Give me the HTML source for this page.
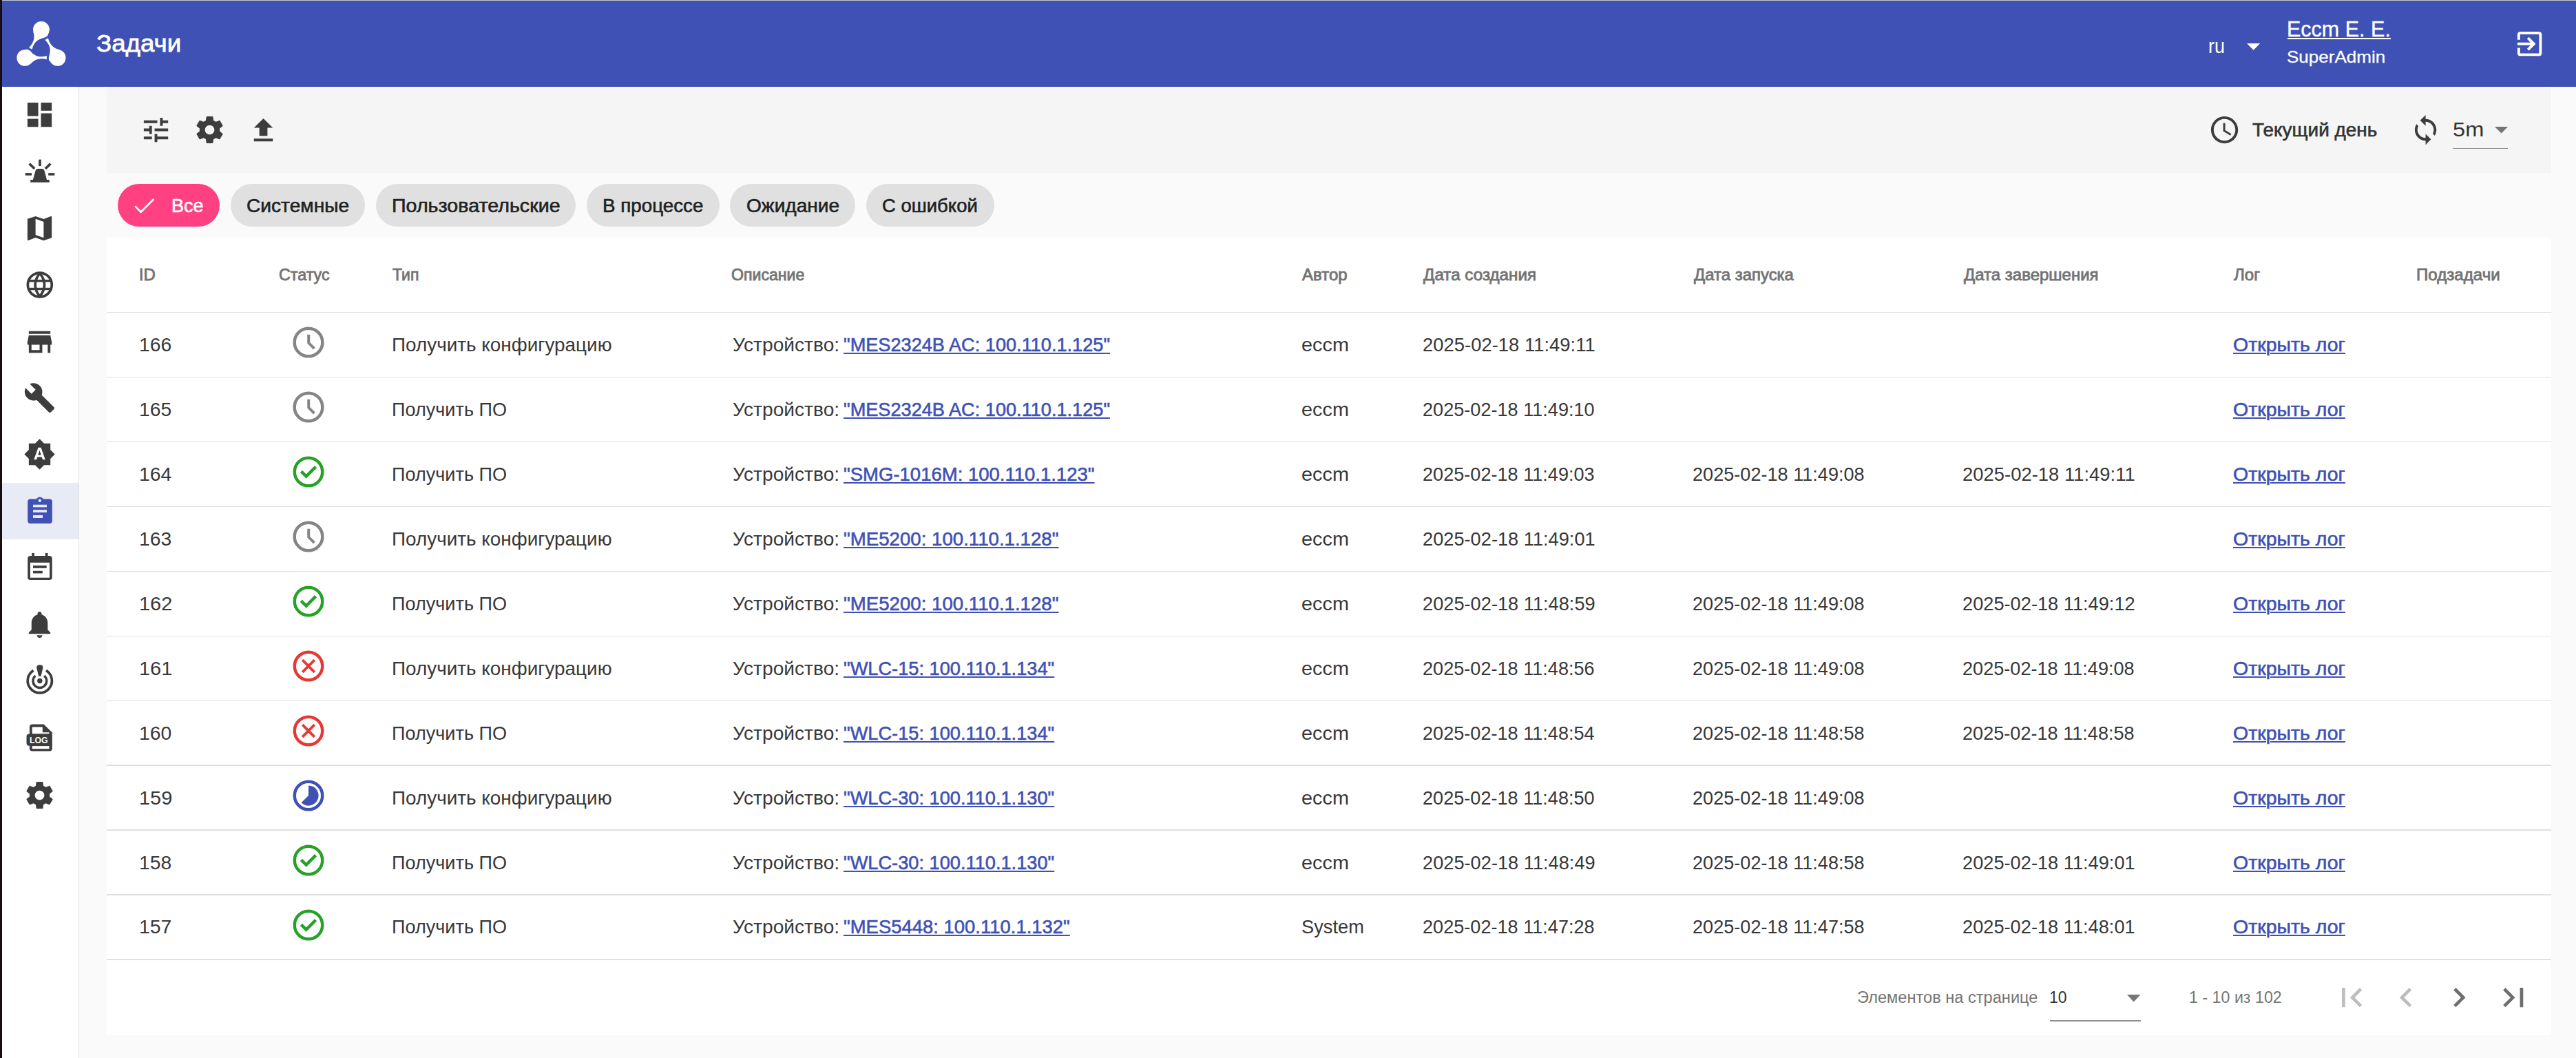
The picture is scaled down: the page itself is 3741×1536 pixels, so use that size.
<!DOCTYPE html>
<html><head><meta charset="utf-8"><title>Задачи</title>
<style>
html,body{margin:0;padding:0;}
body{width:3741px;height:1536px;overflow:hidden;position:relative;background:#fafafa;font-family:"Liberation Sans",sans-serif;}
.b{position:absolute;}
.ic{position:absolute;overflow:visible;}
.t{position:absolute;white-space:nowrap;line-height:1;transform-origin:0 50%;}
</style></head><body>
<div class="b" style="left:0px;top:0px;width:3px;height:1536px;background:#170e11"></div>
<div class="b" style="left:3px;top:0px;width:3738px;height:1px;background:#c4c6cc"></div>
<div class="b" style="left:3px;top:1px;width:3738px;height:125px;background:#3f51b5"></div>
<div class="b" style="left:3px;top:126px;width:111px;height:1410px;background:#fff"></div>
<div class="b" style="left:113.6px;top:126px;width:1.8px;height:1410px;background:#e2e2e2"></div>
<div class="b" style="left:3px;top:701px;width:111px;height:82px;background:#e8eaf6"></div>
<div class="b" style="left:155px;top:126px;width:3550px;height:125px;background:#f5f5f5"></div>
<div class="b" style="left:170.9px;top:267.2px;width:148.5px;height:62px;background:#ff4081;border-radius:31px"></div>
<div class="b" style="left:335px;top:267.2px;width:194.9px;height:62px;background:#e0e0e0;border-radius:31px"></div>
<div class="b" style="left:546.2px;top:267.2px;width:289.8px;height:62px;background:#e0e0e0;border-radius:31px"></div>
<div class="b" style="left:852px;top:267.2px;width:192.6px;height:62px;background:#e0e0e0;border-radius:31px"></div>
<div class="b" style="left:1060.2px;top:267.2px;width:181.8px;height:62px;background:#e0e0e0;border-radius:31px"></div>
<div class="b" style="left:1257.6px;top:267.2px;width:186.4px;height:62px;background:#e0e0e0;border-radius:31px"></div>
<div class="b" style="left:155px;top:344.8px;width:3550px;height:1157.8px;background:#fff"></div>
<div class="b" style="left:155px;top:452.9px;width:3550px;height:1.6px;background:#e0e0e0"></div>
<div class="b" style="left:155px;top:546.84px;width:3550px;height:1.6px;background:#e0e0e0"></div>
<div class="b" style="left:155px;top:640.78px;width:3550px;height:1.6px;background:#e0e0e0"></div>
<div class="b" style="left:155px;top:734.72px;width:3550px;height:1.6px;background:#e0e0e0"></div>
<div class="b" style="left:155px;top:828.66px;width:3550px;height:1.6px;background:#e0e0e0"></div>
<div class="b" style="left:155px;top:922.6px;width:3550px;height:1.6px;background:#e0e0e0"></div>
<div class="b" style="left:155px;top:1016.54px;width:3550px;height:1.6px;background:#e0e0e0"></div>
<div class="b" style="left:155px;top:1110.48px;width:3550px;height:1.6px;background:#e0e0e0"></div>
<div class="b" style="left:155px;top:1204.42px;width:3550px;height:1.6px;background:#e0e0e0"></div>
<div class="b" style="left:155px;top:1298.36px;width:3550px;height:1.6px;background:#e0e0e0"></div>
<div class="b" style="left:155px;top:1392.3px;width:3550px;height:1.6px;background:#e0e0e0"></div>
<div class="b" style="left:3562.1px;top:214.5px;width:79.9px;height:1.8px;background:#8a8a8a"></div>
<div class="b" style="left:3322.2px;top:55.4px;width:150.2px;height:2.1px;background:#fff"></div>
<div class="b" style="left:2977px;top:1481.0px;width:131.7px;height:1.8px;background:#8f8f8f"></div>
<svg class="ic" style="left:34.00px;top:143.20px;width:47.04px;height:47.04px;" viewBox="0 0 24 24"><path fill="#3d3d3d" d="M3 13h8V3H3v10zm0 8h8v-6H3v6zm10 0h8V11h-8v10zm0-18v6h8V3h-8z"/></svg>
<svg class="ic" style="left:34.00px;top:307.60px;width:47.04px;height:47.04px;" viewBox="0 0 24 24"><path fill="#3d3d3d" d="M15,19L9,16.89V5L15,7.11M20.5,3C20.44,3 20.39,3 20.34,3L15,5.1L9,3L3.36,4.9C3.15,4.97 3,5.15 3,5.38V20.5A0.5,0.5 0 0,0 3.5,21C3.55,21 3.61,21 3.66,20.97L9,18.9L15,21L20.64,19.1C20.85,19 21,18.85 21,18.62V3.5A0.5,0.5 0 0,0 20.5,3Z"/></svg>
<svg class="ic" style="left:34.00px;top:472.70px;width:47.04px;height:47.04px;" viewBox="0 0 24 24"><path fill="#3d3d3d" d="M20 4H4v2h16V4zm1 10v-2l-1-5H4l-1 5v2h1v6h10v-6h4v6h2v-6h1zm-9 4H6v-4h6v4z"/></svg>
<svg class="ic" style="left:34.00px;top:554.20px;width:47.04px;height:47.04px;" viewBox="0 0 24 24"><path fill="#3d3d3d" d="M22.7 19l-9.1-9.1c.9-2.3.4-5-1.5-6.9-2-2-5-2.4-7.4-1.3L9 6 6 9 1.6 4.7C.4 7.1.9 10.1 2.9 12.1c1.9 1.9 4.6 2.4 6.9 1.5l9.1 9.1c.4.4 1 .4 1.4 0l2.3-2.3c.5-.4.5-1.1.1-1.4z"/></svg>
<svg class="ic" style="left:34.40px;top:636.40px;width:47.04px;height:47.04px;" viewBox="0 0 24 24"><path fill="#3d3d3d" d="M10.85 12.65h2.3L12 9l-1.15 3.65zM20 8.69V4h-4.69L12 .69 8.69 4H4v4.69L.69 12 4 15.31V20h4.69L12 23.31 15.31 20H20v-4.69L23.31 12 20 8.69zM14.3 16l-.7-2h-3.2l-.7 2H7.8L11 7h2l3.2 9h-1.9z"/></svg>
<svg class="ic" style="left:34.00px;top:883.00px;width:47.04px;height:47.04px;" viewBox="0 0 24 24"><path fill="#3d3d3d" d="M12 22c1.1 0 2-.9 2-2h-4c0 1.1.89 2 2 2zm6-6v-5c0-3.07-1.64-5.64-4.5-6.32V4c0-.83-.67-1.5-1.5-1.5s-1.5.67-1.5 1.5v.68C7.63 5.36 6 7.92 6 11v5l-2 2v1h16v-1l-2-2z"/></svg>
<svg class="ic" style="left:34.20px;top:1130.60px;width:47.04px;height:47.04px;" viewBox="0 0 24 24"><path fill="#3d3d3d" d="M19.43 12.98c.04-.32.07-.64.07-.98s-.03-.66-.07-.98l2.11-1.65c.19-.15.24-.42.12-.64l-2-3.46c-.12-.22-.39-.3-.61-.22l-2.49 1c-.52-.4-1.08-.73-1.69-.98l-.38-2.65C14.46 2.18 14.25 2 14 2h-4c-.25 0-.46.18-.49.42l-.38 2.65c-.61.25-1.17.59-1.69.98l-2.49-1c-.23-.09-.49 0-.61.22l-2 3.46c-.13.22-.07.49.12.64l2.11 1.65c-.04.32-.07.65-.07.98s.03.66.07.98l-2.11 1.65c-.19.15-.24.42-.12.64l2 3.46c.12.22.39.3.61.22l2.49-1c.52.4 1.08.73 1.69.98l.38 2.65c.03.24.24.42.49.42h4c.25 0 .46-.18.49-.42l.38-2.65c.61-.25 1.17-.59 1.69-.98l2.49 1c.23.09.49 0 .61-.22l2-3.46c.12-.22.07-.49-.12-.64l-2.11-1.65zM12 15.5c-1.93 0-3.5-1.57-3.5-3.5s1.57-3.5 3.5-3.5 3.5 1.57 3.5 3.5-1.57 3.5-3.5 3.5z"/></svg>
<svg class="ic" style="left:0;top:0;width:120px;height:1200px" viewBox="0 0 120 1200">
<g fill="#3d3d3d">
 <!-- siren -->
 <rect x="56.1" y="231.6" width="3.7" height="9.5"/>
 <rect x="36.7" y="251.1" width="9.3" height="3.6"/>
 <rect x="70.2" y="251.1" width="9.1" height="3.6"/>
 <path d="M44.2 261 H47.9 L51.4 248.2 Q52.3 245 55.3 245 H60.9 Q63.9 245 64.6 248.2 L68 261 H71.7 V264.8 H44.2 Z"/>
</g>
<g stroke="#3d3d3d" stroke-width="3.7" fill="none">
 <line x1="42.6" y1="237.7" x2="50.2" y2="245"/>
 <line x1="73.4" y1="237.7" x2="65.8" y2="245"/>
 <!-- globe -->
 <circle cx="57.8" cy="413.5" r="17.45"/>
 <path d="M57.8 396.6 Q44.4 413.5 57.8 430.4 Q71.2 413.5 57.8 396.6" stroke-width="3.6"/>
 <!-- crisis alert rings -->
 <path d="M48.6 973.3 A17.6 17.6 0 1 0 67.0 973.3" stroke-width="3.7"/>
 <path d="M51.4 981.0 A9.9 9.9 0 1 0 64.2 981.0" stroke-width="3.4"/>
</g>
<g fill="#3d3d3d">
 <rect x="40" y="406.0" width="36" height="3.4"/>
 <rect x="40" y="417.8" width="36" height="3.4"/>
</g>
<!-- assignment -->
<g fill="#3f51b5">
 <rect x="40.2" y="724.5" width="35.6" height="35.4" rx="4"/>
 <circle cx="57.8" cy="726.8" r="5.4"/>
</g>
<g fill="#e8eaf6">
 <circle cx="57.8" cy="726.8" r="2.2"/>
 <rect x="48" y="732.7" width="19.9" height="3.7"/>
 <rect x="48" y="740.1" width="19.9" height="3.8"/>
 <rect x="48" y="747.9" width="14" height="4.1"/>
</g>
<!-- calendar -->
<g fill="#3d3d3d">
 <rect x="40.2" y="806.9" width="35.5" height="35.2" rx="4"/>
 <rect x="46.2" y="802.9" width="3.7" height="5"/>
 <rect x="65.7" y="802.9" width="3.8" height="5"/>
</g>
<rect x="43.9" y="816.8" width="28.1" height="21.9" fill="#fff"/>
<g fill="#3d3d3d">
 <rect x="48" y="821.1" width="19.7" height="3.7"/>
 <rect x="48" y="828.8" width="13.8" height="3.6"/>
</g>
<!-- crisis alert dot + exclamation -->
<g fill="#3d3d3d">
 <circle cx="57.8" cy="988.5" r="3.7"/>
 <path d="M53.2 969.5 Q53.0 965.2 57.8 965.2 Q62.6 965.2 62.4 969.5 L59.5 981.7 H56.1 Z"/>
</g>
<!-- log file -->
<g fill="#3d3d3d">
 <path d="M47 1051.6 H63.5 L75.8 1063.5 V1086.5 Q75.8 1090.5 71.8 1090.5 H46.9 Q42.9 1090.5 42.9 1086.5 V1082.8 H42.5 Q38.5 1082.8 38.5 1078.8 V1069.5 Q38.5 1065.5 42.5 1065.5 H42.9 V1055.6 Q42.9 1051.6 47 1051.6 Z"/>
</g>
<g fill="#fff">
 <path d="M46.7 1055.5 H61.8 V1063.3 H71.4 V1065.2 H46.7 Z"/>
 <rect x="46.7" y="1083.1" width="24.7" height="4"/>
</g>
<text x="43.0" y="1079" font-family="Liberation Sans" font-weight="700" font-size="13.6" fill="#fff" textLength="26.4" lengthAdjust="spacingAndGlyphs">LOG</text>
</svg>
<svg class="ic" style="left:15px;top:20px;width:90px;height:90px" viewBox="0 0 1058 1058">
<g fill="#fff">
 <g id="lobe"><circle cx="528" cy="270" r="140"/>
 <path d="M392 305 C412 380 425 470 318 578 L372 607 C395 500 460 430 580 408 C610 400 630 385 645 360 L600 300 Z"/></g>
 <use href="#lobe" transform="rotate(120 528 591)"/>
 <use href="#lobe" transform="rotate(240 528 591)"/>
</g></svg>
<svg class="ic" style="left:3650.00px;top:40.00px;width:47.28px;height:47.28px;" viewBox="0 0 24 24"><path fill="#fff" d="M10.09 15.59L11.5 17l5-5-5-5-1.41 1.41L12.67 11H3v2h9.67l-2.58 2.59zM19 3H5c-1.11 0-2 .9-2 2v4h2V5h14v14H5v-4H3v4c0 1.1.89 2 2 2h14c1.1 0 2-.9 2-2V5c0-1.1-.9-2-2-2z"/></svg>
<svg class="ic" style="left:202.50px;top:165.10px;width:47.04px;height:47.04px;" viewBox="0 0 24 24"><path fill="#3d3d3d" d="M3 17v2h6v-2H3zM3 5v2h10V5H3zm10 16v-2h8v-2h-8v-2h-2v6h2zM7 9v2H3v2h4v2h2V9H7zm14 4v-2H11v2h10zm-6-4h2V7h4V5h-4V3h-2v6z"/></svg>
<svg class="ic" style="left:280.80px;top:165.20px;width:47.04px;height:47.04px;" viewBox="0 0 24 24"><path fill="#3d3d3d" d="M19.43 12.98c.04-.32.07-.64.07-.98s-.03-.66-.07-.98l2.11-1.65c.19-.15.24-.42.12-.64l-2-3.46c-.12-.22-.39-.3-.61-.22l-2.49 1c-.52-.4-1.08-.73-1.69-.98l-.38-2.65C14.46 2.18 14.25 2 14 2h-4c-.25 0-.46.18-.49.42l-.38 2.65c-.61.25-1.17.59-1.69.98l-2.49-1c-.23-.09-.49 0-.61.22l-2 3.46c-.13.22-.07.49.12.64l2.11 1.65c-.04.32-.07.65-.07.98s.03.66.07.98l-2.11 1.65c-.19.15-.24.42-.12.64l2 3.46c.12.22.39.3.61.22l2.49-1c.52.4 1.08.73 1.69.98l.38 2.65c.03.24.24.42.49.42h4c.25 0 .46-.18.49-.42l.38-2.65c.61-.25 1.17-.59 1.69-.98l2.49 1c.23.09.49 0 .61-.22l2-3.46c.12-.22.07-.49-.12-.64l-2.11-1.65zM12 15.5c-1.93 0-3.5-1.57-3.5-3.5s1.57-3.5 3.5-3.5 3.5 1.57 3.5 3.5-1.57 3.5-3.5 3.5z"/></svg>
<svg class="ic" style="left:359.10px;top:165.50px;width:47.04px;height:47.04px;" viewBox="0 0 24 24"><path fill="#3d3d3d" d="M9 16h6v-6h4l-7-7-7 7h4zm-4 2h14v2H5z"/></svg>
<svg class="ic" style="left:3206.80px;top:165.10px;width:47.16px;height:47.16px;" viewBox="0 0 24 24"><path fill="#3d3d3d" d="M11.99 2C6.47 2 2 6.48 2 12s4.47 10 9.99 10C17.52 22 22 17.52 22 12S17.52 2 11.99 2zM12 20c-4.42 0-8-3.58-8-8s3.58-8 8-8 8 3.58 8 8-3.58 8-8 8zm.5-13H11v6l5.25 3.15.75-1.23-4.5-2.67z"/></svg>
<svg class="ic" style="left:3499.00px;top:165.00px;width:47.16px;height:47.16px;" viewBox="0 0 24 24"><path fill="#3d3d3d" d="M12 4V1L8 5l4 4V6c3.31 0 6 2.69 6 6 0 1.01-.25 1.97-.7 2.8l1.46 1.46C19.54 15.03 20 13.57 20 12c0-4.42-3.58-8-8-8zm0 14c-3.31 0-6-2.69-6-6 0-1.01.25-1.97.7-2.8L5.24 7.74C4.46 8.97 4 10.43 4 12c0 4.42 3.58 8 8 8v3l4-4-4-4v3z"/></svg>
<svg class="ic" style="left:420.80px;top:470.37px;width:54.00px;height:54.00px" viewBox="0 0 24 24"><circle cx="12" cy="12" r="9.04" fill="none" stroke="#858585" stroke-width="2"/><path d="M12.1 6.95 V12.35 L15.75 16.0" fill="none" stroke="#858585" stroke-width="1.75" stroke-linejoin="miter"/></svg>
<svg class="ic" style="left:420.80px;top:564.31px;width:54.00px;height:54.00px" viewBox="0 0 24 24"><circle cx="12" cy="12" r="9.04" fill="none" stroke="#858585" stroke-width="2"/><path d="M12.1 6.95 V12.35 L15.75 16.0" fill="none" stroke="#858585" stroke-width="1.75" stroke-linejoin="miter"/></svg>
<svg class="ic" style="left:420.80px;top:658.25px;width:54.00px;height:54.00px" viewBox="0 0 24 24"><circle cx="12" cy="12" r="9" fill="none" stroke="#27a127" stroke-width="2"/><path d="M7.29 11.69 L10.53 14.93 L16.71 8.75" fill="none" stroke="#27a127" stroke-width="2.0"/></svg>
<svg class="ic" style="left:420.80px;top:752.19px;width:54.00px;height:54.00px" viewBox="0 0 24 24"><circle cx="12" cy="12" r="9.04" fill="none" stroke="#858585" stroke-width="2"/><path d="M12.1 6.95 V12.35 L15.75 16.0" fill="none" stroke="#858585" stroke-width="1.75" stroke-linejoin="miter"/></svg>
<svg class="ic" style="left:420.80px;top:846.13px;width:54.00px;height:54.00px" viewBox="0 0 24 24"><circle cx="12" cy="12" r="9" fill="none" stroke="#27a127" stroke-width="2"/><path d="M7.29 11.69 L10.53 14.93 L16.71 8.75" fill="none" stroke="#27a127" stroke-width="2.0"/></svg>
<svg class="ic" style="left:420.80px;top:940.07px;width:54.00px;height:54.00px" viewBox="0 0 24 24"><circle cx="12" cy="12" r="9" fill="none" stroke="#e53935" stroke-width="2"/><path d="M8.1 8.1 L15.9 15.9 M15.9 8.1 L8.1 15.9" fill="none" stroke="#e53935" stroke-width="1.7"/></svg>
<svg class="ic" style="left:420.80px;top:1034.01px;width:54.00px;height:54.00px" viewBox="0 0 24 24"><circle cx="12" cy="12" r="9" fill="none" stroke="#e53935" stroke-width="2"/><path d="M8.1 8.1 L15.9 15.9 M15.9 8.1 L8.1 15.9" fill="none" stroke="#e53935" stroke-width="1.7"/></svg>
<svg class="ic" style="left:420.80px;top:1127.95px;width:54.00px;height:54.00px" viewBox="0 0 24 24"><circle cx="12" cy="12" r="9" fill="none" stroke="#3f51b5" stroke-width="2"/><path d="M12 12 V5.5 A6.5 6.5 0 1 1 7.4 16.6 Z" fill="#3f51b5"/></svg>
<svg class="ic" style="left:420.80px;top:1221.89px;width:54.00px;height:54.00px" viewBox="0 0 24 24"><circle cx="12" cy="12" r="9" fill="none" stroke="#27a127" stroke-width="2"/><path d="M7.29 11.69 L10.53 14.93 L16.71 8.75" fill="none" stroke="#27a127" stroke-width="2.0"/></svg>
<svg class="ic" style="left:420.80px;top:1315.83px;width:54.00px;height:54.00px" viewBox="0 0 24 24"><circle cx="12" cy="12" r="9" fill="none" stroke="#27a127" stroke-width="2"/><path d="M7.29 11.69 L10.53 14.93 L16.71 8.75" fill="none" stroke="#27a127" stroke-width="2.0"/></svg>
<svg class="ic" style="left:3386.90px;top:1420.40px;width:56.40px;height:56.40px;" viewBox="0 0 24 24"><path fill="#bdbdbd" d="M18.41 16.59L13.82 12l4.59-4.59L17 6l-6 6 6 6zM6 6h2v12H6z"/></svg>
<svg class="ic" style="left:3465.60px;top:1420.40px;width:56.40px;height:56.40px;" viewBox="0 0 24 24"><path fill="#bdbdbd" d="M15.41 7.41L14 6l-6 6 6 6 1.41-1.41L10.83 12z"/></svg>
<svg class="ic" style="left:3542.51px;top:1420.40px;width:56.40px;height:56.40px;" viewBox="0 0 24 24"><path fill="#6e6e6e" d="M10 6L8.59 7.41 13.17 12l-4.58 4.59L10 18l6-6z"/></svg>
<svg class="ic" style="left:3621.66px;top:1420.40px;width:56.40px;height:56.40px;" viewBox="0 0 24 24"><path fill="#6e6e6e" d="M5.59 7.41L10.18 12l-4.59 4.59L7 18l6-6-6-6zM16 6h2v12h-2z"/></svg>
<svg class="ic" style="left:3262.8px;top:63.3px;width:19.20px;height:9.70px" viewBox="0 0 10 5" preserveAspectRatio="none"><path d="M0 0 H10 L5 5 Z" fill="#fff"/></svg>
<svg class="ic" style="left:3622.9px;top:183.9px;width:19.10px;height:9.50px" viewBox="0 0 10 5" preserveAspectRatio="none"><path d="M0 0 H10 L5 5 Z" fill="#757575"/></svg>
<svg class="ic" style="left:3089.2px;top:1443.8px;width:19.50px;height:10.60px" viewBox="0 0 10 5" preserveAspectRatio="none"><path d="M0 0 H10 L5 5 Z" fill="#757575"/></svg>
<svg class="ic" style="left:190px;top:283px;width:40px;height:32px" viewBox="190 283 40 32"><path d="M196.3 299.4 L204.6 307.8 L223.3 289.0" fill="none" stroke="#fff" stroke-width="2.7"/></svg>
<div class="t" style="left:140.29px;top:45.69px;font-size:34.50px;color:#fff;-webkit-text-stroke:0.76px #fff;transform:scaleX(1.0629);">Задачи</div>
<div class="t" style="left:3207.48px;top:51.55px;font-size:29.47px;color:#fff;transform:scaleX(0.9157);">ru</div>
<div class="t" style="left:3321.01px;top:27.87px;font-size:30.87px;color:#fff;-webkit-text-stroke:0.37px #fff;transform:scaleX(0.9885);">Eccm E. E.</div>
<div class="t" style="left:3321.28px;top:71.03px;font-size:24.30px;color:#fff;-webkit-text-stroke:0.29px #fff;transform:scaleX(1.0716);">SuperAdmin</div>
<div class="t" style="left:3270.51px;top:174.61px;font-size:27.51px;color:#333;-webkit-text-stroke:0.61px #333;transform:scaleX(1.0159);">Текущий день</div>
<div class="t" style="left:3561.81px;top:173.39px;font-size:29.96px;color:#333;transform:scaleX(1.0893);">5m</div>
<div class="t" style="left:249.10px;top:284.86px;font-size:27.09px;color:#fff;-webkit-text-stroke:0.60px #fff;transform:scaleX(1.0001);">Все</div>
<div class="t" style="left:358.27px;top:284.86px;font-size:27.09px;color:#222;-webkit-text-stroke:0.60px #222;transform:scaleX(1.0394);">Системные</div>
<div class="t" style="left:568.50px;top:284.86px;font-size:27.09px;color:#222;-webkit-text-stroke:0.60px #222;transform:scaleX(1.0576);">Пользовательские</div>
<div class="t" style="left:874.85px;top:284.86px;font-size:27.09px;color:#222;-webkit-text-stroke:0.60px #222;transform:scaleX(1.0256);">В процессе</div>
<div class="t" style="left:1083.57px;top:284.86px;font-size:27.09px;color:#222;-webkit-text-stroke:0.60px #222;transform:scaleX(1.0370);">Ожидание</div>
<div class="t" style="left:1280.89px;top:284.86px;font-size:27.09px;color:#222;-webkit-text-stroke:0.60px #222;transform:scaleX(1.0140);">С ошибкой</div>
<div class="t" style="left:201.82px;top:387.28px;font-size:23.88px;color:#737373;-webkit-text-stroke:0.84px #737373;transform:scaleX(1.0000);">ID</div>
<div class="t" style="left:404.73px;top:387.28px;font-size:23.88px;color:#737373;-webkit-text-stroke:0.84px #737373;transform:scaleX(0.9752);">Статус</div>
<div class="t" style="left:570.10px;top:387.28px;font-size:23.88px;color:#737373;-webkit-text-stroke:0.84px #737373;transform:scaleX(0.9646);">Тип</div>
<div class="t" style="left:1061.94px;top:387.28px;font-size:23.88px;color:#737373;-webkit-text-stroke:0.84px #737373;transform:scaleX(0.9679);">Описание</div>
<div class="t" style="left:1891.02px;top:387.28px;font-size:23.88px;color:#737373;-webkit-text-stroke:0.84px #737373;transform:scaleX(1.0036);">Автор</div>
<div class="t" style="left:2067.32px;top:387.28px;font-size:23.88px;color:#737373;-webkit-text-stroke:0.84px #737373;transform:scaleX(1.0142);">Дата создания</div>
<div class="t" style="left:2459.72px;top:387.28px;font-size:23.88px;color:#737373;-webkit-text-stroke:0.84px #737373;transform:scaleX(1.0030);">Дата запуска</div>
<div class="t" style="left:2851.52px;top:387.28px;font-size:23.88px;color:#737373;-webkit-text-stroke:0.84px #737373;transform:scaleX(1.0052);">Дата завершения</div>
<div class="t" style="left:3244.22px;top:387.28px;font-size:23.88px;color:#737373;-webkit-text-stroke:0.84px #737373;transform:scaleX(1.0108);">Лог</div>
<div class="t" style="left:3509.21px;top:387.28px;font-size:23.88px;color:#737373;-webkit-text-stroke:0.84px #737373;transform:scaleX(1.0098);">Подзадачи</div>
<div class="t" style="left:202.34px;top:486.99px;font-size:27.37px;color:#383838;transform:scaleX(1.0315);">166</div>
<div class="t" style="left:568.96px;top:486.99px;font-size:27.37px;color:#383838;transform:scaleX(1.0194);">Получить конфигурацию</div>
<div class="t" style="left:1063.50px;top:486.99px;font-size:27.37px;color:#383838;transform:scaleX(1.0293);">Устройство:</div>
<div class="t" style="left:1224.61px;top:486.99px;font-size:27.37px;color:#3f51b5;-webkit-text-stroke:0.60px #3f51b5;transform:scaleX(0.9922);text-decoration:underline;text-decoration-thickness:2px;text-underline-offset:2px;">&quot;MES2324B AC: 100.110.1.125&quot;</div>
<div class="t" style="left:1889.54px;top:486.99px;font-size:27.37px;color:#383838;transform:scaleX(1.0563);">eccm</div>
<div class="t" style="left:2065.90px;top:486.99px;font-size:27.37px;color:#383838;transform:scaleX(1.0029);">2025-02-18 11:49:11</div>
<div class="t" style="left:3243.07px;top:486.99px;font-size:27.37px;color:#3f51b5;-webkit-text-stroke:0.60px #3f51b5;transform:scaleX(1.0414);text-decoration:underline;text-decoration-thickness:2px;text-underline-offset:2px;">Открыть лог</div>
<div class="t" style="left:202.34px;top:580.93px;font-size:27.37px;color:#383838;transform:scaleX(1.0315);">165</div>
<div class="t" style="left:569.02px;top:580.93px;font-size:27.37px;color:#383838;transform:scaleX(0.9897);">Получить ПО</div>
<div class="t" style="left:1063.50px;top:580.93px;font-size:27.37px;color:#383838;transform:scaleX(1.0293);">Устройство:</div>
<div class="t" style="left:1224.61px;top:580.93px;font-size:27.37px;color:#3f51b5;-webkit-text-stroke:0.60px #3f51b5;transform:scaleX(0.9922);text-decoration:underline;text-decoration-thickness:2px;text-underline-offset:2px;">&quot;MES2324B AC: 100.110.1.125&quot;</div>
<div class="t" style="left:1889.54px;top:580.93px;font-size:27.37px;color:#383838;transform:scaleX(1.0563);">eccm</div>
<div class="t" style="left:2065.91px;top:580.93px;font-size:27.37px;color:#383838;transform:scaleX(0.9908);">2025-02-18 11:49:10</div>
<div class="t" style="left:3243.07px;top:580.93px;font-size:27.37px;color:#3f51b5;-webkit-text-stroke:0.60px #3f51b5;transform:scaleX(1.0414);text-decoration:underline;text-decoration-thickness:2px;text-underline-offset:2px;">Открыть лог</div>
<div class="t" style="left:202.34px;top:674.87px;font-size:27.37px;color:#383838;transform:scaleX(1.0315);">164</div>
<div class="t" style="left:569.02px;top:674.87px;font-size:27.37px;color:#383838;transform:scaleX(0.9897);">Получить ПО</div>
<div class="t" style="left:1063.50px;top:674.87px;font-size:27.37px;color:#383838;transform:scaleX(1.0293);">Устройство:</div>
<div class="t" style="left:1224.60px;top:674.87px;font-size:27.37px;color:#3f51b5;-webkit-text-stroke:0.60px #3f51b5;transform:scaleX(1.0052);text-decoration:underline;text-decoration-thickness:2px;text-underline-offset:2px;">&quot;SMG-1016M: 100.110.1.123&quot;</div>
<div class="t" style="left:1889.54px;top:674.87px;font-size:27.37px;color:#383838;transform:scaleX(1.0563);">eccm</div>
<div class="t" style="left:2065.91px;top:674.87px;font-size:27.37px;color:#383838;transform:scaleX(0.9908);">2025-02-18 11:49:03</div>
<div class="t" style="left:2458.31px;top:674.87px;font-size:27.37px;color:#383838;transform:scaleX(0.9908);">2025-02-18 11:49:08</div>
<div class="t" style="left:2850.10px;top:674.87px;font-size:27.37px;color:#383838;transform:scaleX(1.0029);">2025-02-18 11:49:11</div>
<div class="t" style="left:3243.07px;top:674.87px;font-size:27.37px;color:#3f51b5;-webkit-text-stroke:0.60px #3f51b5;transform:scaleX(1.0414);text-decoration:underline;text-decoration-thickness:2px;text-underline-offset:2px;">Открыть лог</div>
<div class="t" style="left:202.34px;top:768.81px;font-size:27.37px;color:#383838;transform:scaleX(1.0315);">163</div>
<div class="t" style="left:568.96px;top:768.81px;font-size:27.37px;color:#383838;transform:scaleX(1.0194);">Получить конфигурацию</div>
<div class="t" style="left:1063.50px;top:768.81px;font-size:27.37px;color:#383838;transform:scaleX(1.0293);">Устройство:</div>
<div class="t" style="left:1224.59px;top:768.81px;font-size:27.37px;color:#3f51b5;-webkit-text-stroke:0.60px #3f51b5;transform:scaleX(1.0099);text-decoration:underline;text-decoration-thickness:2px;text-underline-offset:2px;">&quot;ME5200: 100.110.1.128&quot;</div>
<div class="t" style="left:1889.54px;top:768.81px;font-size:27.37px;color:#383838;transform:scaleX(1.0563);">eccm</div>
<div class="t" style="left:2065.91px;top:768.81px;font-size:27.37px;color:#383838;transform:scaleX(0.9948);">2025-02-18 11:49:01</div>
<div class="t" style="left:3243.07px;top:768.81px;font-size:27.37px;color:#3f51b5;-webkit-text-stroke:0.60px #3f51b5;transform:scaleX(1.0414);text-decoration:underline;text-decoration-thickness:2px;text-underline-offset:2px;">Открыть лог</div>
<div class="t" style="left:202.29px;top:862.75px;font-size:27.37px;color:#383838;transform:scaleX(1.0558);">162</div>
<div class="t" style="left:569.02px;top:862.75px;font-size:27.37px;color:#383838;transform:scaleX(0.9897);">Получить ПО</div>
<div class="t" style="left:1063.50px;top:862.75px;font-size:27.37px;color:#383838;transform:scaleX(1.0293);">Устройство:</div>
<div class="t" style="left:1224.59px;top:862.75px;font-size:27.37px;color:#3f51b5;-webkit-text-stroke:0.60px #3f51b5;transform:scaleX(1.0099);text-decoration:underline;text-decoration-thickness:2px;text-underline-offset:2px;">&quot;ME5200: 100.110.1.128&quot;</div>
<div class="t" style="left:1889.54px;top:862.75px;font-size:27.37px;color:#383838;transform:scaleX(1.0563);">eccm</div>
<div class="t" style="left:2065.91px;top:862.75px;font-size:27.37px;color:#383838;transform:scaleX(0.9948);">2025-02-18 11:48:59</div>
<div class="t" style="left:2458.31px;top:862.75px;font-size:27.37px;color:#383838;transform:scaleX(0.9908);">2025-02-18 11:49:08</div>
<div class="t" style="left:2850.11px;top:862.75px;font-size:27.37px;color:#383838;transform:scaleX(0.9948);">2025-02-18 11:49:12</div>
<div class="t" style="left:3243.07px;top:862.75px;font-size:27.37px;color:#3f51b5;-webkit-text-stroke:0.60px #3f51b5;transform:scaleX(1.0414);text-decoration:underline;text-decoration-thickness:2px;text-underline-offset:2px;">Открыть лог</div>
<div class="t" style="left:202.29px;top:956.69px;font-size:27.37px;color:#383838;transform:scaleX(1.0558);">161</div>
<div class="t" style="left:568.96px;top:956.69px;font-size:27.37px;color:#383838;transform:scaleX(1.0194);">Получить конфигурацию</div>
<div class="t" style="left:1063.50px;top:956.69px;font-size:27.37px;color:#383838;transform:scaleX(1.0293);">Устройство:</div>
<div class="t" style="left:1224.60px;top:956.69px;font-size:27.37px;color:#3f51b5;-webkit-text-stroke:0.60px #3f51b5;transform:scaleX(0.9945);text-decoration:underline;text-decoration-thickness:2px;text-underline-offset:2px;">&quot;WLC-15: 100.110.1.134&quot;</div>
<div class="t" style="left:1889.54px;top:956.69px;font-size:27.37px;color:#383838;transform:scaleX(1.0563);">eccm</div>
<div class="t" style="left:2065.91px;top:956.69px;font-size:27.37px;color:#383838;transform:scaleX(0.9908);">2025-02-18 11:48:56</div>
<div class="t" style="left:2458.31px;top:956.69px;font-size:27.37px;color:#383838;transform:scaleX(0.9908);">2025-02-18 11:49:08</div>
<div class="t" style="left:2850.11px;top:956.69px;font-size:27.37px;color:#383838;transform:scaleX(0.9908);">2025-02-18 11:49:08</div>
<div class="t" style="left:3243.07px;top:956.69px;font-size:27.37px;color:#3f51b5;-webkit-text-stroke:0.60px #3f51b5;transform:scaleX(1.0414);text-decoration:underline;text-decoration-thickness:2px;text-underline-offset:2px;">Открыть лог</div>
<div class="t" style="left:202.34px;top:1050.63px;font-size:27.37px;color:#383838;transform:scaleX(1.0315);">160</div>
<div class="t" style="left:569.02px;top:1050.63px;font-size:27.37px;color:#383838;transform:scaleX(0.9897);">Получить ПО</div>
<div class="t" style="left:1063.50px;top:1050.63px;font-size:27.37px;color:#383838;transform:scaleX(1.0293);">Устройство:</div>
<div class="t" style="left:1224.60px;top:1050.63px;font-size:27.37px;color:#3f51b5;-webkit-text-stroke:0.60px #3f51b5;transform:scaleX(0.9945);text-decoration:underline;text-decoration-thickness:2px;text-underline-offset:2px;">&quot;WLC-15: 100.110.1.134&quot;</div>
<div class="t" style="left:1889.54px;top:1050.63px;font-size:27.37px;color:#383838;transform:scaleX(1.0563);">eccm</div>
<div class="t" style="left:2065.91px;top:1050.63px;font-size:27.37px;color:#383838;transform:scaleX(0.9908);">2025-02-18 11:48:54</div>
<div class="t" style="left:2458.31px;top:1050.63px;font-size:27.37px;color:#383838;transform:scaleX(0.9908);">2025-02-18 11:48:58</div>
<div class="t" style="left:2850.11px;top:1050.63px;font-size:27.37px;color:#383838;transform:scaleX(0.9908);">2025-02-18 11:48:58</div>
<div class="t" style="left:3243.07px;top:1050.63px;font-size:27.37px;color:#3f51b5;-webkit-text-stroke:0.60px #3f51b5;transform:scaleX(1.0414);text-decoration:underline;text-decoration-thickness:2px;text-underline-offset:2px;">Открыть лог</div>
<div class="t" style="left:202.29px;top:1144.57px;font-size:27.37px;color:#383838;transform:scaleX(1.0558);">159</div>
<div class="t" style="left:568.96px;top:1144.57px;font-size:27.37px;color:#383838;transform:scaleX(1.0194);">Получить конфигурацию</div>
<div class="t" style="left:1063.50px;top:1144.57px;font-size:27.37px;color:#383838;transform:scaleX(1.0293);">Устройство:</div>
<div class="t" style="left:1224.60px;top:1144.57px;font-size:27.37px;color:#3f51b5;-webkit-text-stroke:0.60px #3f51b5;transform:scaleX(0.9945);text-decoration:underline;text-decoration-thickness:2px;text-underline-offset:2px;">&quot;WLC-30: 100.110.1.130&quot;</div>
<div class="t" style="left:1889.54px;top:1144.57px;font-size:27.37px;color:#383838;transform:scaleX(1.0563);">eccm</div>
<div class="t" style="left:2065.91px;top:1144.57px;font-size:27.37px;color:#383838;transform:scaleX(0.9908);">2025-02-18 11:48:50</div>
<div class="t" style="left:2458.31px;top:1144.57px;font-size:27.37px;color:#383838;transform:scaleX(0.9908);">2025-02-18 11:49:08</div>
<div class="t" style="left:3243.07px;top:1144.57px;font-size:27.37px;color:#3f51b5;-webkit-text-stroke:0.60px #3f51b5;transform:scaleX(1.0414);text-decoration:underline;text-decoration-thickness:2px;text-underline-offset:2px;">Открыть лог</div>
<div class="t" style="left:202.34px;top:1238.51px;font-size:27.37px;color:#383838;transform:scaleX(1.0315);">158</div>
<div class="t" style="left:569.02px;top:1238.51px;font-size:27.37px;color:#383838;transform:scaleX(0.9897);">Получить ПО</div>
<div class="t" style="left:1063.50px;top:1238.51px;font-size:27.37px;color:#383838;transform:scaleX(1.0293);">Устройство:</div>
<div class="t" style="left:1224.60px;top:1238.51px;font-size:27.37px;color:#3f51b5;-webkit-text-stroke:0.60px #3f51b5;transform:scaleX(0.9945);text-decoration:underline;text-decoration-thickness:2px;text-underline-offset:2px;">&quot;WLC-30: 100.110.1.130&quot;</div>
<div class="t" style="left:1889.54px;top:1238.51px;font-size:27.37px;color:#383838;transform:scaleX(1.0563);">eccm</div>
<div class="t" style="left:2065.91px;top:1238.51px;font-size:27.37px;color:#383838;transform:scaleX(0.9948);">2025-02-18 11:48:49</div>
<div class="t" style="left:2458.31px;top:1238.51px;font-size:27.37px;color:#383838;transform:scaleX(0.9908);">2025-02-18 11:48:58</div>
<div class="t" style="left:2850.11px;top:1238.51px;font-size:27.37px;color:#383838;transform:scaleX(0.9948);">2025-02-18 11:49:01</div>
<div class="t" style="left:3243.07px;top:1238.51px;font-size:27.37px;color:#3f51b5;-webkit-text-stroke:0.60px #3f51b5;transform:scaleX(1.0414);text-decoration:underline;text-decoration-thickness:2px;text-underline-offset:2px;">Открыть лог</div>
<div class="t" style="left:202.33px;top:1332.45px;font-size:27.37px;color:#383838;transform:scaleX(1.0370);">157</div>
<div class="t" style="left:569.02px;top:1332.45px;font-size:27.37px;color:#383838;transform:scaleX(0.9897);">Получить ПО</div>
<div class="t" style="left:1063.50px;top:1332.45px;font-size:27.37px;color:#383838;transform:scaleX(1.0293);">Устройство:</div>
<div class="t" style="left:1224.60px;top:1332.45px;font-size:27.37px;color:#3f51b5;-webkit-text-stroke:0.60px #3f51b5;transform:scaleX(1.0034);text-decoration:underline;text-decoration-thickness:2px;text-underline-offset:2px;">&quot;MES5448: 100.110.1.132&quot;</div>
<div class="t" style="left:1890.30px;top:1332.45px;font-size:27.37px;color:#383838;transform:scaleX(0.9963);">System</div>
<div class="t" style="left:2065.91px;top:1332.45px;font-size:27.37px;color:#383838;transform:scaleX(0.9908);">2025-02-18 11:47:28</div>
<div class="t" style="left:2458.31px;top:1332.45px;font-size:27.37px;color:#383838;transform:scaleX(0.9908);">2025-02-18 11:47:58</div>
<div class="t" style="left:2850.11px;top:1332.45px;font-size:27.37px;color:#383838;transform:scaleX(0.9948);">2025-02-18 11:48:01</div>
<div class="t" style="left:3243.07px;top:1332.45px;font-size:27.37px;color:#3f51b5;-webkit-text-stroke:0.60px #3f51b5;transform:scaleX(1.0414);text-decoration:underline;text-decoration-thickness:2px;text-underline-offset:2px;">Открыть лог</div>
<div class="t" style="left:2696.91px;top:1436.80px;font-size:23.74px;color:#757575;transform:scaleX(0.9947);">Элементов на странице</div>
<div class="t" style="left:2976.03px;top:1436.80px;font-size:23.74px;color:#333;transform:scaleX(0.9722);">10</div>
<div class="t" style="left:3179.32px;top:1436.80px;font-size:23.74px;color:#757575;transform:scaleX(0.9792);">1 - 10 из 102</div>
</body></html>
